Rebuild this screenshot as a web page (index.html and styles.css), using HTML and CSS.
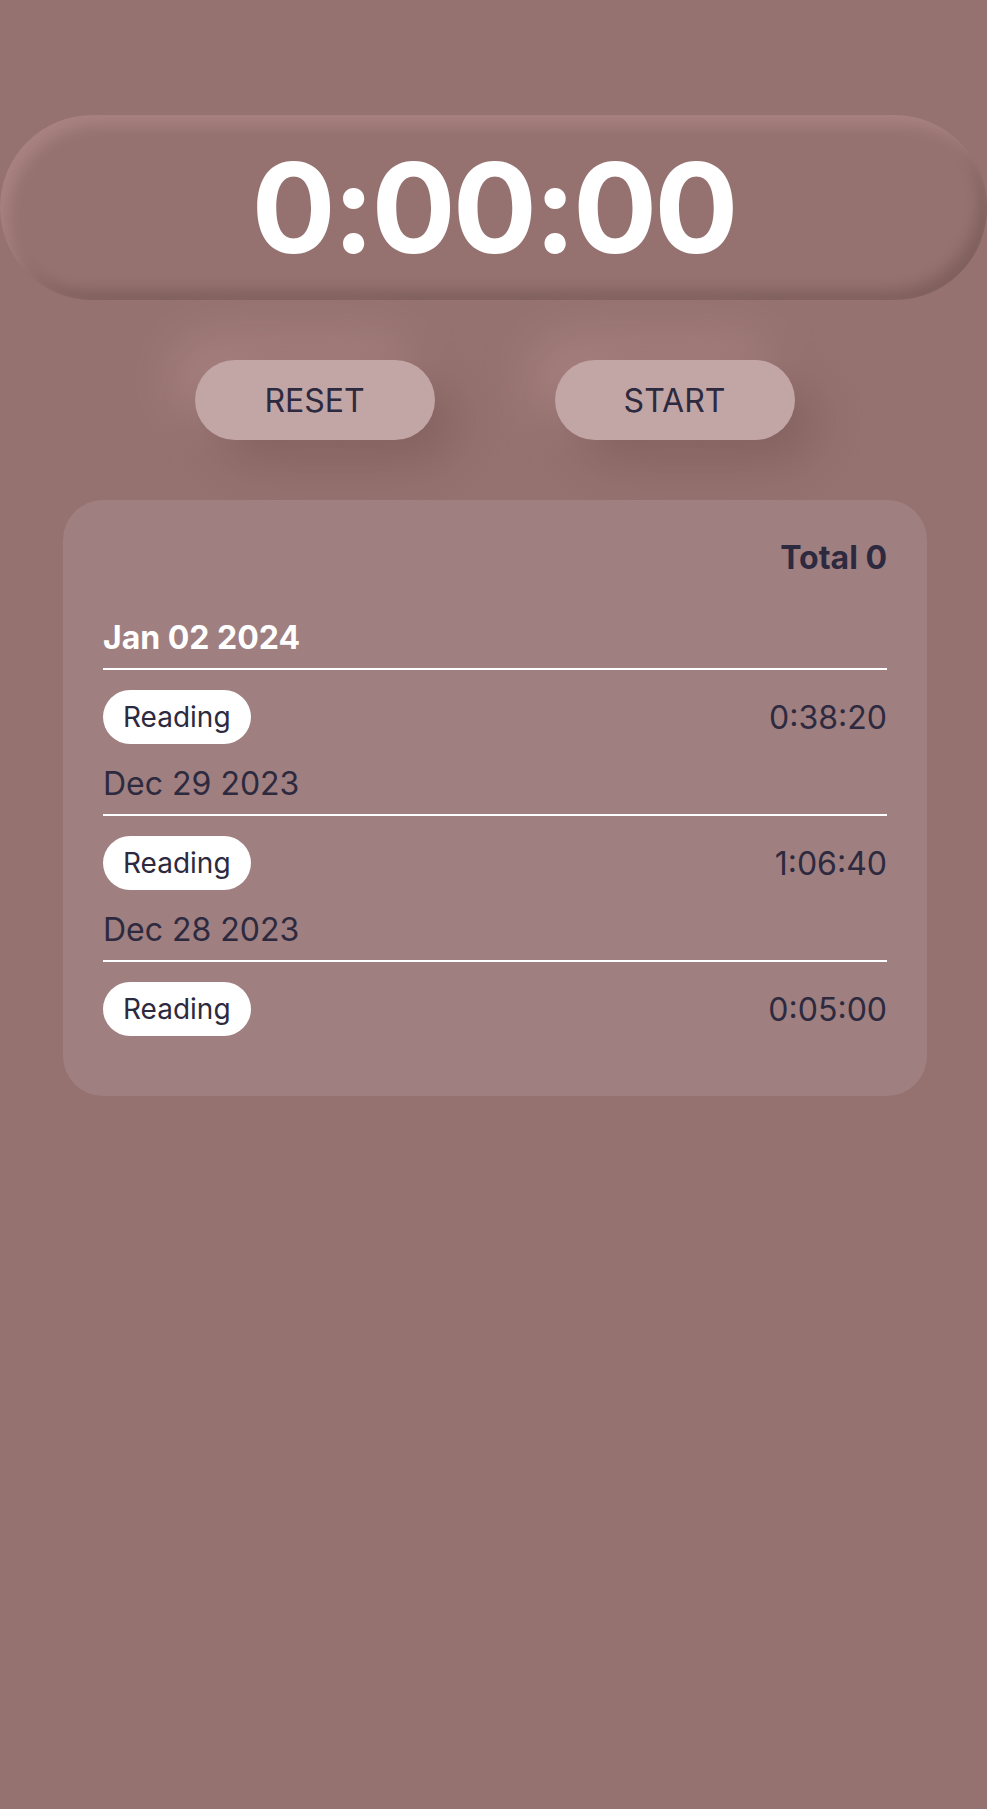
FILE: index.html
```html
<!DOCTYPE html>
<html lang="en">
<head>
  <meta charset="UTF-8">
  <meta name="viewport" content="width=device-width, initial-scale=1.0">
  <title>Timer</title>
  <link rel="stylesheet" href="styles.css">
</head>
<body>

<main class="app">
  <div class="clock" id="clock">0:00:00</div>

  <div class="controls">
    <button class="control" id="reset-button">RESET</button>
    <button class="control" id="start-button">START</button>
  </div>

  <section class="log">
    <div class="log-total">Total 0</div>

    <div class="day">
      <h2 class="day-date current">Jan 02 2024</h2>
      <div class="entry">
        <span class="tag">Reading</span>
        <span class="duration">0:38:20</span>
      </div>
    </div>

    <div class="day">
      <h2 class="day-date">Dec 29 2023</h2>
      <div class="entry">
        <span class="tag">Reading</span>
        <span class="duration">1:06:40</span>
      </div>
    </div>

    <div class="day">
      <h2 class="day-date">Dec 28 2023</h2>
      <div class="entry">
        <span class="tag">Reading</span>
        <span class="duration">0:05:00</span>
      </div>
    </div>
  </section>
</main>

</body>
</html>
```

FILE: styles.css
```css
* {
  box-sizing: border-box;
}

body {
  margin: 0;
  padding: 0;
  font-family: Inter, 'Noto Sans', sans-serif;
  background-color: #957270;
  color: #2d2a40;
  min-height: 100vh;
  overflow-x: hidden;
}

.app {
  display: flex;
  flex-direction: column;
  padding-top: 115px;
  gap: 60px;
}

.clock {
  height: 185px;
  width: 100%;
  border-radius: 999px;
  display: flex;
  justify-content: center;
  align-items: center;
  font-size: 125px;
  font-weight: 700;
  letter-spacing: -3px;
  color: white;
  background-color: #957270;
  box-shadow: inset 8px 10px 14px #a88281, inset -8px -10px 14px #80605d;
}

.controls {
  display: flex;
  justify-content: center;
  gap: 120px;
  padding-left: 2px;
}

.control {
  width: 240px;
  height: 80px;
  border: none;
  border-radius: 40px;
  background-color: #c2a5a5;
  color: #2d2a40;
  font-family: inherit;
  font-size: 32px;
  cursor: pointer;
  box-shadow: 22px 22px 50px #84625f, -22px -22px 50px #a88281;
}

.log {
  margin: 0 60px 0 63px;
  padding: 40px;
  border-radius: 40px;
  background-color: #9f7f7f;
}

.log-total {
  text-align: right;
  font-size: 32px;
  line-height: 36px;
  font-weight: 700;
  margin-bottom: 44px;
}

.day-date {
  margin: 0;
  font-size: 32px;
  line-height: 36px;
  font-weight: 400;
  padding-bottom: 12px;
  border-bottom: 2px solid white;
}

.day-date.current {
  font-weight: 700;
  color: white;
}

.entry {
  display: flex;
  justify-content: space-between;
  align-items: center;
  margin: 20px 0 22px;
}

.day:last-child .entry {
  margin-bottom: 20px;
}

.tag {
  display: flex;
  align-items: center;
  height: 54px;
  padding: 0 20px;
  border-radius: 27px;
  background-color: white;
  font-size: 28px;
}

.duration {
  font-size: 32px;
}
```
